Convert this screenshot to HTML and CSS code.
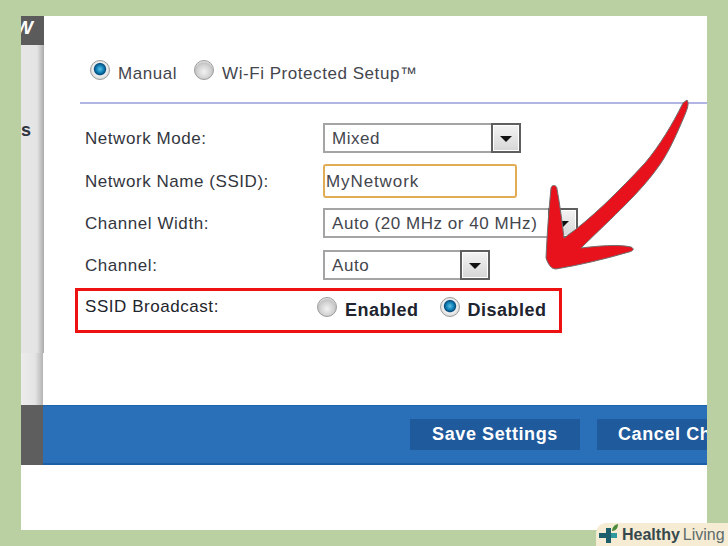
FILE: index.html
```html
<!DOCTYPE html>
<html lang="en">
<head>
    <meta charset="UTF-8">
    <meta name="viewport" content="width=device-width, initial-scale=1.0">
    <title>Wireless Settings</title>
    <link rel="stylesheet" href="styles.css">
</head>
<body>
<div class="shot">
    <div class="main">
        <aside class="sidebar">
            <div class="sidebar-top"><span>W</span></div>
            <div class="sidebar-body"><span>s</span></div>
            <div class="sidebar-foot"></div>
        </aside>
        <div class="content">
            <div class="mode-row">
                <span class="radio checked"></span>
                <span class="mode-label">Manual</span>
                <span class="radio"></span>
                <span class="mode-label">Wi-Fi Protected Setup™</span>
            </div>
            <div class="rule"></div>
            <div class="form-row row-mode">
                <label>Network Mode:</label>
                <div class="select select-mode">
                    <span>Mixed</span>
                    <i class="select-btn"></i>
                </div>
            </div>
            <div class="form-row row-name">
                <label>Network Name (SSID):</label>
                <div class="text-input">MyNetwork</div>
            </div>
            <div class="form-row row-width">
                <label>Channel Width:</label>
                <div class="select select-width">
                    <span>Auto (20 MHz or 40 MHz)</span>
                    <i class="select-btn"></i>
                </div>
            </div>
            <div class="form-row row-channel">
                <label>Channel:</label>
                <div class="select select-channel">
                    <span>Auto</span>
                    <i class="select-btn"></i>
                </div>
            </div>
            <div class="broadcast">
                <label>SSID Broadcast:</label>
                <span class="radio"></span>
                <span class="broadcast-label">Enabled</span>
                <span class="radio checked"></span>
                <span class="broadcast-label">Disabled</span>
            </div>
        </div>
    </div>
    <div class="action-bar">
        <div class="bar-side"></div>
        <div class="bar-buttons">
            <button class="bar-btn btn-save">Save Settings</button>
            <button class="bar-btn btn-cancel">Cancel Ch</button>
        </div>
    </div>
</div>

<svg class="arrow" viewBox="0 0 728 546" width="728" height="546">
    <path d="M687 100 C690 104 686 112 684 117 C675 138 667 156 656 170 C640 192 615 215 581 248 C598 246 618 244 631 247 C635 249 633 251 629 252 C605 259 580 265 556 269 C551 269 548 264 546 258 C547 235 549 208 551 188 C552 184 557 185 557 189 C560 205 562 222 564 238 C590 220 620 190 645 163 C660 145 672 125 683 103 Z"
          fill="#e8121c" stroke="#6f6f6f" stroke-width="1"/>
</svg>

<div class="badge">
    <svg class="badge-icon" viewBox="0 0 20 23" width="20" height="23">
        <path d="M0 10h7V5h5v15H7v-5H0z" fill="#1d5f6b"/>
        <path d="M12 10h6v5h-6z" fill="#2f9a9c"/>
        <path d="M13 8c0-3 2-6 6-7 0 4-2 7-6 7z" fill="#4c8a3c"/>
    </svg>
    <span class="badge-bold">Healthy</span>
    <span class="badge-light">Living</span>
</div>
</body>
</html>
```

FILE: styles.css
```css
*, *:before, *:after {
    box-sizing: border-box;
}

html, body {
    height: 546px;
    overflow: hidden;
}

body {
    margin: 0;
    padding: 16px 21px;
    background-color: #bad0a3;
    color: #2b2b33;
    font-family: "Liberation Sans", Arial, sans-serif;
}

.shot {
    width: 686px;
    height: 514px;
    background-color: #ffffff;
    overflow: hidden;
}

.main {
    display: flex;
    height: 389px;
}

.sidebar {
    width: 23px;
    flex: none;
    display: flex;
    flex-direction: column;
}

.sidebar-top {
    height: 29px;
    background-color: #5b5b5b;
    color: #ffffff;
    font-weight: bold;
    font-style: italic;
    font-size: 19px;
    overflow: hidden;
    text-indent: -6px;
    padding-top: 1px;
}

.sidebar-body {
    flex: 1;
    background: linear-gradient(to right, #e6e6e6 0, #e4e4e4 16px, #aaaaaa 23px);
    color: #30343c;
    font-weight: bold;
    font-size: 18px;
    padding-top: 75px;
    overflow: hidden;
}

.sidebar-foot {
    width: 22px;
    height: 52px;
    background: linear-gradient(to right, #ececec 0, #e4e4e4 14px, #b4b4b4 22px);
}

.content {
    flex: 1;
    min-width: 0;
    padding-top: 44px;
}

.mode-row {
    display: flex;
    align-items: center;
    height: 20px;
    padding-left: 46px;
    font-size: 17px;
    color: #44464e;
    letter-spacing: 0.55px;
}

.mode-label {
    margin: 7px 17px 0 8px;
}

.radio {
    width: 20px;
    height: 20px;
    flex: none;
    border-radius: 50%;
    border: 1px solid #9c9c9c;
    background: radial-gradient(circle at 50% 60%, #f2f2f2 0, #d4d4d4 45%, #c4c4c4 62%, #efefef 80%);
}

.radio.checked {
    background: radial-gradient(circle at 50% 45%, #5fc1e6 0, #0f7fb5 28%, #0a4f80 42%, #f0f0f0 50%, #d2d2d2 85%);
}

.rule {
    height: 2px;
    margin: 22px 0 0 36px;
    background-color: #b2b4e4;
}

.form-row {
    display: flex;
    align-items: center;
    padding-left: 41px;
    font-size: 17px;
    letter-spacing: 0.55px;
}

.form-row label {
    width: 238px;
    flex: none;
    margin-top: 2px;
    color: #33363e;
}

.row-mode {
    margin-top: 19px;
}

.row-name {
    margin-top: 11px;
}

.row-width {
    margin-top: 10px;
}

.row-channel {
    margin-top: 12px;
}

.select {
    display: flex;
    justify-content: space-between;
    align-items: center;
    height: 30px;
    padding-left: 7px;
    border: 2px solid #a4a4a4;
    background-color: #ffffff;
    color: #44464e;
    white-space: nowrap;
}

.select span {
    margin-top: 2px;
}

.select-mode {
    width: 198px;
}

.select-width {
    width: 255px;
}

.select-channel {
    width: 167px;
}

.select-btn {
    position: relative;
    width: 30px;
    height: 30px;
    flex: none;
    margin-right: -2px;
    border: 2px solid #5f5f5f;
    background: linear-gradient(#f4f4f4, #d6d6d6);
    box-shadow: inset 0 0 0 1px #ffffff;
}

.select-btn:after {
    content: "";
    position: absolute;
    left: 7px;
    top: 11px;
    border-style: solid;
    border-width: 6px 6px 0;
    border-color: #111111 transparent transparent;
}

.text-input {
    display: flex;
    align-items: center;
    width: 194px;
    height: 34px;
    padding: 2px 0 0 1px;
    border: 2px solid #e0ad55;
    border-radius: 3px;
    background-color: #ffffff;
    color: #44464e;
    letter-spacing: 0.9px;
}

.broadcast {
    display: flex;
    align-items: center;
    width: 487px;
    height: 45px;
    margin: 8px 0 0 31px;
    padding: 0 0 4px 7px;
    border: 3px solid #ee1111;
    font-size: 17px;
    letter-spacing: 0.55px;
}

.broadcast label {
    width: 232px;
    flex: none;
    margin-top: -3px;
    color: #22242c;
}

.broadcast .radio {
    margin-top: -4px;
}

.broadcast-label {
    margin: 4px 21px 0 8px;
    font-size: 18px;
    font-weight: bold;
    letter-spacing: 0.5px;
    color: #20242e;
}

.action-bar {
    display: flex;
    height: 60px;
}

.bar-side {
    width: 22px;
    flex: none;
    background-color: #5e5e5e;
}

.bar-buttons {
    flex: 1;
    min-width: 0;
    display: flex;
    align-items: center;
    gap: 17px;
    padding-left: 367px;
    overflow: hidden;
    background-color: #2a70b8;
    border-top: 1px solid #1f63a8;
    border-bottom: 2px solid #1c5fa4;
}

.bar-btn {
    flex: none;
    height: 31px;
    padding: 0;
    border: 0;
    background-color: #1f5a9c;
    color: #ffffff;
    font-family: "Liberation Sans", Arial, sans-serif;
    font-size: 18px;
    font-weight: bold;
    letter-spacing: 0.6px;
}

.btn-save {
    width: 170px;
}

.btn-cancel {
    width: 160px;
    padding-left: 21px;
    text-align: left;
}

.arrow {
    position: absolute;
    left: 0;
    top: 0;
}

.badge {
    position: absolute;
    right: 0;
    bottom: 0;
    display: flex;
    align-items: center;
    width: 132px;
    height: 23px;
    padding-left: 3px;
    border-top-left-radius: 10px;
    background-color: #f6ebd3;
    font-size: 16px;
    white-space: nowrap;
}

.badge-icon {
    flex: none;
    margin-right: 3px;
}

.badge-bold {
    font-weight: bold;
    color: #35494c;
}

.badge-light {
    margin-left: 3px;
    color: #5d6b6c;
}
```
